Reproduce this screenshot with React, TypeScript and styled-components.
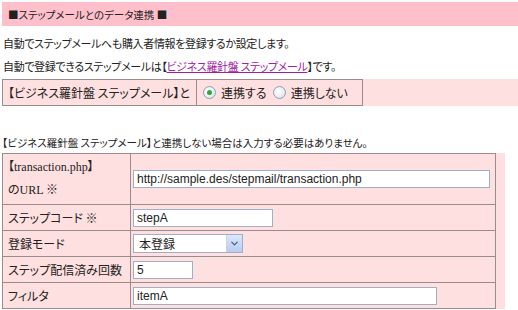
import React from 'react';
import styled, { createGlobalStyle } from 'styled-components';
import { ChevronDown } from 'lucide-react';

const GlobalStyle = createGlobalStyle`
  body {
    margin: 0;
    background: #fff;
    color: #222;
    font-family: "Noto Sans CJK JP", "Liberation Sans", sans-serif;
    font-size: 12px;
    font-feature-settings: "palt";
  }
`;

const Page = styled.div`
  padding: 2px 0 0 2px;
`;

const SectionHeader = styled.div`
  background: #ffc0cb;
  height: 24px;
  padding-left: 6px;
  display: flex;
  align-items: center;
  font-size: 10.5px;
`;

const Para = styled.p`
  margin: 0;
  padding-left: 1px;
  line-height: 23px;
  font-size: 11px;
  letter-spacing: -0.35px;
`;

const Link = styled.a`
  color: #a020a0;
  text-decoration: underline;
`;

const ToggleBar = styled.div`
  background: #ffe0e0;
  margin-top: 1px;
`;

const Table = styled.table<{ width: number }>`
  width: ${({ width }) => width}px;
  border-collapse: collapse;
  border: 1px solid #9a8c8c;
`;

const Cell = styled.td<{ label?: boolean; serif?: boolean }>`
  border: 1px solid #9a8c8c;
  padding: ${({ label }) => (label ? '2px 5px' : '2px 2px')};
  background: #ffe0e0;
  font-size: 12px;
  white-space: nowrap;
  font-family: ${({ serif }) =>
    serif ? '"Liberation Serif", "Noto Sans CJK JP", serif' : 'inherit'};
  line-height: ${({ serif }) => (serif ? '23px' : '21px')};
`;

const RadioGroup = styled.div`
  display: flex;
  align-items: center;
  gap: 4px;
  padding-left: 4px;
  font-size: 12px;
`;

const RadioLabel = styled.label`
  display: flex;
  align-items: center;
  gap: 5px;
  margin-right: 2px;
`;

const RadioDot = styled.span<{ checked?: boolean }>`
  width: 11px;
  height: 11px;
  border-radius: 50%;
  border: 1px solid #8aa0b8;
  background: radial-gradient(circle at 40% 40%, #fff 0%, #e4e8ee 70%, #cfd6e0 100%);
  display: inline-flex;
  align-items: center;
  justify-content: center;
  &::after {
    content: '';
    width: 5px;
    height: 5px;
    border-radius: 50%;
    background: ${({ checked }) => (checked ? '#2fa83a' : 'transparent')};
  }
`;

const Note = styled.p`
  margin: 28px 0 0 0;
  font-size: 10.5px;
  line-height: 18px;
`;

const FormArea = styled.div`
  background: #ffe0e0;
  width: 503px;
  margin-top: 1px;
`;

const TextInput = styled.input<{ w: number }>`
  width: ${({ w }) => w}px;
  height: 18px;
  box-sizing: border-box;
  border: 1px solid #9fb0c6;
  background: #fff;
  padding: 0 3px;
  font-family: "Liberation Sans", "Noto Sans CJK JP", sans-serif;
  font-size: 12px;
  color: #222;
  display: block;
`;

const SelectBox = styled.div`
  width: 110px;
  height: 19px;
  box-sizing: border-box;
  border: 1px solid #9fb0c6;
  background: #fff;
  display: flex;
  align-items: stretch;
`;

const SelectText = styled.span`
  flex: 1;
  padding-left: 5px;
  display: flex;
  align-items: center;
  font-size: 12px;
`;

const SelectButton = styled.span`
  width: 15px;
  background: linear-gradient(#dbe6fa, #b8cdf2);
  border-left: 1px solid #c6d4ec;
  display: flex;
  align-items: center;
  justify-content: center;
  color: #4d6185;
`;

const rows: { label: string; control: React.ReactNode }[] = [
  { label: 'ステップコード ※', control: <TextInput w={140} defaultValue="stepA" /> },
  {
    label: '登録モード',
    control: (
      <SelectBox>
        <SelectText>本登録</SelectText>
        <SelectButton>
          <ChevronDown size={11} strokeWidth={3} />
        </SelectButton>
      </SelectBox>
    ),
  },
  { label: 'ステップ配信済み回数', control: <TextInput w={60} defaultValue="5" /> },
  { label: 'フィルタ', control: <TextInput w={304} defaultValue="itemA" /> },
];

export default function App() {
  return (
    <Page>
      <GlobalStyle />
      <SectionHeader>■ステップメールとのデータ連携 ■</SectionHeader>
      <Para style={{ marginTop: 6 }}>自動でステップメールへも購入者情報を登録するか設定します。</Para>
      <Para>
        自動で登録できるステップメールは【<Link href="#">ビジネス羅針盤 ステップメール</Link>】です。
      </Para>
      <ToggleBar>
        <Table width={361}>
          <tbody>
            <tr>
              <Cell label style={{ width: 183 }}>【ビジネス羅針盤 ステップメール】と</Cell>
              <Cell>
                <RadioGroup>
                  <RadioLabel>
                    <RadioDot checked />
                    連携する
                  </RadioLabel>
                  <RadioLabel>
                    <RadioDot />
                    連携しない
                  </RadioLabel>
                </RadioGroup>
              </Cell>
            </tr>
          </tbody>
        </Table>
      </ToggleBar>
      <Note>【ビジネス羅針盤 ステップメール】と連携しない場合は入力する必要はありません。</Note>
      <FormArea>
        <Table width={494}>
          <tbody>
            <tr>
              <Cell label serif style={{ width: 117 }}>
                【transaction.php】
                <br />
                のURL ※
              </Cell>
              <Cell>
                <TextInput w={357} defaultValue="http://sample.des/stepmail/transaction.php" />
              </Cell>
            </tr>
            {rows.map((row) => (
              <tr key={row.label}>
                <Cell label>{row.label}</Cell>
                <Cell>{row.control}</Cell>
              </tr>
            ))}
          </tbody>
        </Table>
      </FormArea>
    </Page>
  );
}
